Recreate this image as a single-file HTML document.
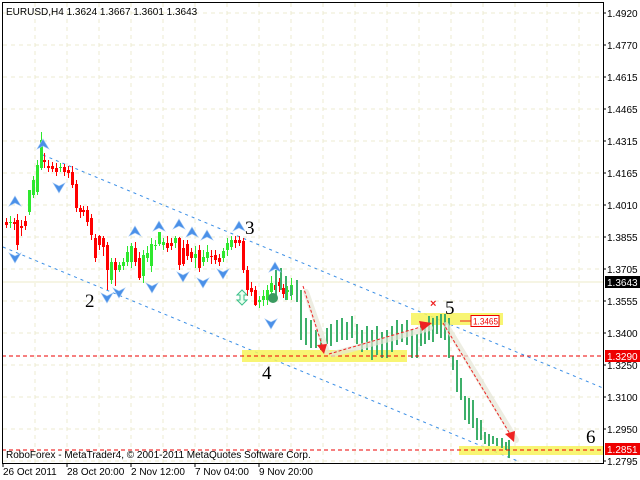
<!DOCTYPE html>
<html><head><meta charset="utf-8"><style>
body{margin:0;background:#fff;width:640px;height:480px;overflow:hidden;font-family:"Liberation Sans",sans-serif}
svg{display:block}
</style></head><body>
<svg id="s" width="640" height="480" xmlns="http://www.w3.org/2000/svg" font-family="Liberation Sans, sans-serif">
<rect width="640" height="480" fill="#fff"/>
<g id="grid" stroke="#ecebd0" stroke-dasharray="4,4" stroke-width="1"></g>
<line x1="2" y1="282" x2="603" y2="282" stroke="#ecebc8"/>
<!-- channels -->
<line x1="43" y1="155" x2="603" y2="388" stroke="#3a8ee6" stroke-dasharray="3,4"/>
<line x1="3" y1="247" x2="520" y2="462" stroke="#3a8ee6" stroke-dasharray="3,4"/>
<!-- yellow boxes -->
<rect x="242" y="350" width="165" height="12" fill="#f7f35a" opacity="0.85"/>
<rect x="411" y="313" width="92" height="12" fill="#f7f35a" opacity="0.85"/>
<rect x="459" y="446" width="144" height="9" fill="#f7f35a" opacity="0.85"/>
<g id="c"></g>
<!-- red dashed -->
<line x1="2" y1="356" x2="603" y2="356" stroke="#e00" stroke-dasharray="4,3"/>
<line x1="2" y1="450" x2="603" y2="450" stroke="#e00" stroke-dasharray="4,3"/>
<!-- shadow paths -->
<g stroke="#e6e6d6" stroke-width="6" opacity="0.7" fill="none" stroke-linecap="round">
<line x1="306" y1="292" x2="327" y2="352"/><line x1="333" y1="354" x2="430" y2="328"/><line x1="446" y1="325" x2="516" y2="440"/>
</g>
<!-- red arrows -->
<g stroke="#e22" stroke-dasharray="3,2" stroke-width="1">
<line x1="303" y1="286" x2="322" y2="345"/>
<line x1="329" y1="354" x2="424" y2="326"/>
<line x1="443" y1="323" x2="510" y2="434"/>
<line x1="460" y1="321" x2="471" y2="321" stroke-dasharray="none"/>
</g>
<g fill="#e22">
<polygon points="317,345 327,344 324,354"/>
<polygon points="419,321 432,323 422,331"/>
<polygon points="505,434 515,431 514,442"/>
</g>
<text x="430" y="307" fill="#e22" font-size="11" font-weight="bold">×</text>
<rect x="471" y="315.5" width="28" height="11" fill="#fff" stroke="#e00"/>
<text x="473" y="324.5" font-size="9" fill="#e00" textLength="25" lengthAdjust="spacingAndGlyphs">1.3465</text>
<!-- wave numbers -->
<g font-family="Liberation Serif, serif" font-size="19" fill="#000">
<text x="245" y="234">3</text><text x="85" y="307">2</text><text x="262" y="379">4</text><text x="445" y="314">5</text><text x="586" y="443">6</text>
</g>
<g id="ar"></g>
<!-- frame -->
<rect x="2.5" y="2.5" width="601" height="461" fill="none" stroke="#000"/>
<g id="ax" font-size="10" fill="#000"></g>
<rect x="605" y="276" width="35" height="12" fill="#000"/><text x="607" y="286" font-size="10" fill="#fff">1.3643</text>
<rect x="605" y="350" width="35" height="12" fill="#e00"/><text x="607" y="360" font-size="10" fill="#fff">1.3290</text>
<rect x="605" y="443" width="35" height="12" fill="#e00"/><text x="607" y="453" font-size="10" fill="#fff">1.2851</text>
<text x="6" y="15" font-size="10">EURUSD,H4  1.3624 1.3667 1.3601 1.3643</text>
<text x="6" y="458" font-size="10">RoboForex - MetaTrader4, © 2001-2011 MetaQuotes Software Corp.</text>
<g font-size="10"><text x="3" y="475">26 Oct 2011</text><text x="67" y="475">28 Oct 20:00</text><text x="131" y="475">2 Nov 12:00</text><text x="195" y="475">7 Nov 04:00</text><text x="259" y="475">9 Nov 20:00</text></g>
</svg>
<script>
var N='http://www.w3.org/2000/svg';
function el(p,t,a){var e=document.createElementNS(N,t);for(var k in a)e.setAttribute(k,a[k]);p.appendChild(e);return e;}
var g=document.getElementById('grid');
for(var x=35;x<603;x+=32)el(g,'line',{x1:x,y1:3,x2:x,y2:463});
var labs=['1.4920','1.4770','1.4615','1.4465','1.4315','1.4165','1.4010','1.3855','1.3705','1.3555','1.3400','1.3250','1.3100','1.2950','1.2795'];
var ax=document.getElementById('ax');
labs.forEach(function(l,i){var y=13+i*32;el(g,'line',{x1:3,y1:y,x2:603,y2:y});
 el(ax,'line',{x1:603,y1:y,x2:606,y2:y,stroke:'#000'});var t=el(ax,'text',{x:607,y:y+4});t.textContent=l;});
[3,67,131,195,259].forEach(function(x){el(ax,'line',{x1:x,y1:463,x2:x,y2:467,stroke:'#000'});});
var c=document.getElementById('c');
var d=[[5,222,225,218,228],[9,223,222,216,228],[13,222,224,218,230],[16,220,245,214,250],[20,226,228,220,236],[24,221,226,216,230],[28,212,190,205,215],[32,195,180,176,198],[36,192,165,160,195],[40,168,140,132,170],[43,160,162,153,168],[47,166,168,160,172],[51,166,169,162,172],[55,168,172,163,176],[59,168,167,163,172],[63,167,172,164,176],[67,170,173,166,178],[71,172,185,166,188],[75,184,208,180,212],[79,208,212,205,218],[82,210,212,206,216],[86,210,222,206,226],[90,218,235,214,240],[94,238,258,234,262],[98,236,245,235,250],[102,238,247,236,256],[106,245,270,242,290],[110,280,262,258,284],[114,262,270,258,286],[118,270,265,262,272],[122,266,262,258,270],[126,262,252,246,266],[130,262,246,243,268],[134,248,262,242,266],[138,258,278,252,280],[142,276,255,250,283],[146,258,253,246,262],[150,266,244,238,272],[154,246,245,240,250],[158,244,232,232,246],[162,245,242,238,250],[166,243,248,236,252],[170,243,246,238,250],[174,243,238,236,248],[178,238,265,237,270],[182,248,264,240,266],[186,244,256,240,260],[190,252,258,248,262],[194,258,254,246,268],[198,250,268,245,272],[202,262,257,250,266],[206,258,252,245,262],[210,256,256,250,264],[214,255,260,250,264],[218,258,262,254,266],[222,258,251,248,262],[226,250,243,238,256],[230,247,240,236,250],[234,240,243,236,248],[238,240,243,236,246],[242,241,270,238,273],[246,270,290,266,296],[250,288,292,282,296],[254,290,305,286,306],[258,302,300,296,308],[262,300,296,290,306],[266,300,290,285,305],[270,292,283,276,302],[274,285,290,276,296],[278,282,286,278,292],[282,288,294,284,298],[286,292,290,286,300],[290,295,285,278,300]];
d.forEach(function(b){var col=b[2]<b[1]?'#2ee82e':'#f00';var lo=Math.min(b[1],b[2]),hi=Math.max(b[1],b[2]);
 el(c,'line',{x1:b[0]+1.5,y1:b[3],x2:b[0]+1.5,y2:b[4],stroke:col});
 el(c,'rect',{x:b[0],y:lo,width:3,height:Math.max(1,hi-lo),fill:col});});
var f=[[275,270,300],[280,268,290],[285,276,300],[290,286,296],[296,280,302],[300,290,340],[305,318,345],[310,320,348],[315,330,348],[320,338,350],[326,328,344],[330,324,346],[336,320,342],[341,318,340],[346,322,340],[351,316,338],[356,324,344],[361,330,352],[366,326,350],[371,330,360],[376,326,355],[381,332,358],[386,330,358],[391,326,352],[396,320,345],[401,324,342],[406,320,345],[411,330,358],[416,334,358],[420,322,346],[424,324,344],[428,316,340],[432,318,342],[436,316,334],[440,314,338],[444,314,340],[448,318,358],[452,356,370],[456,360,392],[460,378,400],[464,396,420],[468,398,424],[472,400,428],[476,418,440],[480,420,440],[484,432,444],[488,434,446],[492,436,444],[496,438,446],[501,438,448],[505,442,450],[508,440,458]];
f.forEach(function(b){el(c,'rect',{x:b[0],y:b[1],width:2,height:b[2]-b[1],fill:'#3daf6a'});});
el(c,'circle',{cx:273,cy:298,r:5,fill:'#3a9a60'});
var ar=document.getElementById('ar');
function up(x,y){el(ar,'path',{d:'M'+x+' '+(y-6)+' L'+(x+6)+' '+(y+4)+' L'+x+' '+(y+1)+' L'+(x-6)+' '+(y+4)+'Z',fill:'#4a90e8',stroke:'#9cc4f4','stroke-width':0.6});}
function dn(x,y){el(ar,'path',{d:'M'+x+' '+(y+6)+' L'+(x+6)+' '+(y-4)+' L'+x+' '+(y-1)+' L'+(x-6)+' '+(y-4)+'Z',fill:'#4a90e8',stroke:'#9cc4f4','stroke-width':0.6});}
[[43,145],[15,202],[135,232],[159,227],[179,225],[192,233],[207,236],[239,227],[275,268]].forEach(function(p){up(p[0],p[1]);});
[[15,257],[59,187],[107,297],[119,292],[152,287],[183,276],[203,282],[223,273],[271,323]].forEach(function(p){dn(p[0],p[1]);});
el(ar,'path',{d:'M242 290 L237 295 L240 295 L240 300 L237 300 L242 305 L247 300 L244 300 L244 295 L247 295Z',fill:'#eafff0',stroke:'#3bbf8a'});
</script>
</body></html>
